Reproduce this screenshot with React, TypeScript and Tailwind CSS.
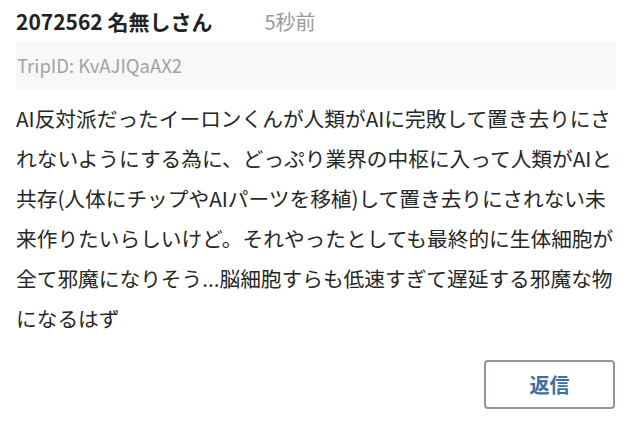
import React from 'react';

const body =
    'AI反対派だったイーロンくんが人類がAIに完敗して置き去りにされないようにする為に、どっぷり業界の中枢に入って人類がAIと共存(人体にチップやAIパーツを移植)して置き去りにされない未来作りたいらしいけど。それやったとしても最終的に生体細胞が全て邪魔になりそう...脳細胞すらも低速すぎて遅延する邪魔な物になるはず';

const App: React.FC = () => {
    return (
        <div
            className="w-[632px] h-[421px] bg-white px-4 overflow-hidden"
            style={{ fontFamily: '"Noto Sans CJK JP", "Noto Sans", sans-serif' }}
        >
            <div className="h-[42px] flex items-center gap-[52px] pt-[2px]">
                <span className="text-[21px] font-bold text-[#222222]">2072562 名無しさん</span>
                <span className="text-[20px] text-[#9a9a9a]">5秒前</span>
            </div>
            <div className="h-[48px] bg-[#f8f8f8] flex items-center px-[1px]">
                <span className="text-[18.5px] text-[#9ea3a8]">TripID: KvAJIQaAX2</span>
            </div>
            <p className="mt-2 text-[20.7px] leading-[40px] text-[#262626] break-all">{body}</p>
            <div className="flex justify-end mt-[22px] pr-px">
                <button className="w-[131px] h-[49px] border-2 border-[#8c97a5] rounded-[4px] text-[20px] font-bold text-[#3f6ea5] bg-white">
                    返信
                </button>
            </div>
        </div>
    );
};

export default App;
